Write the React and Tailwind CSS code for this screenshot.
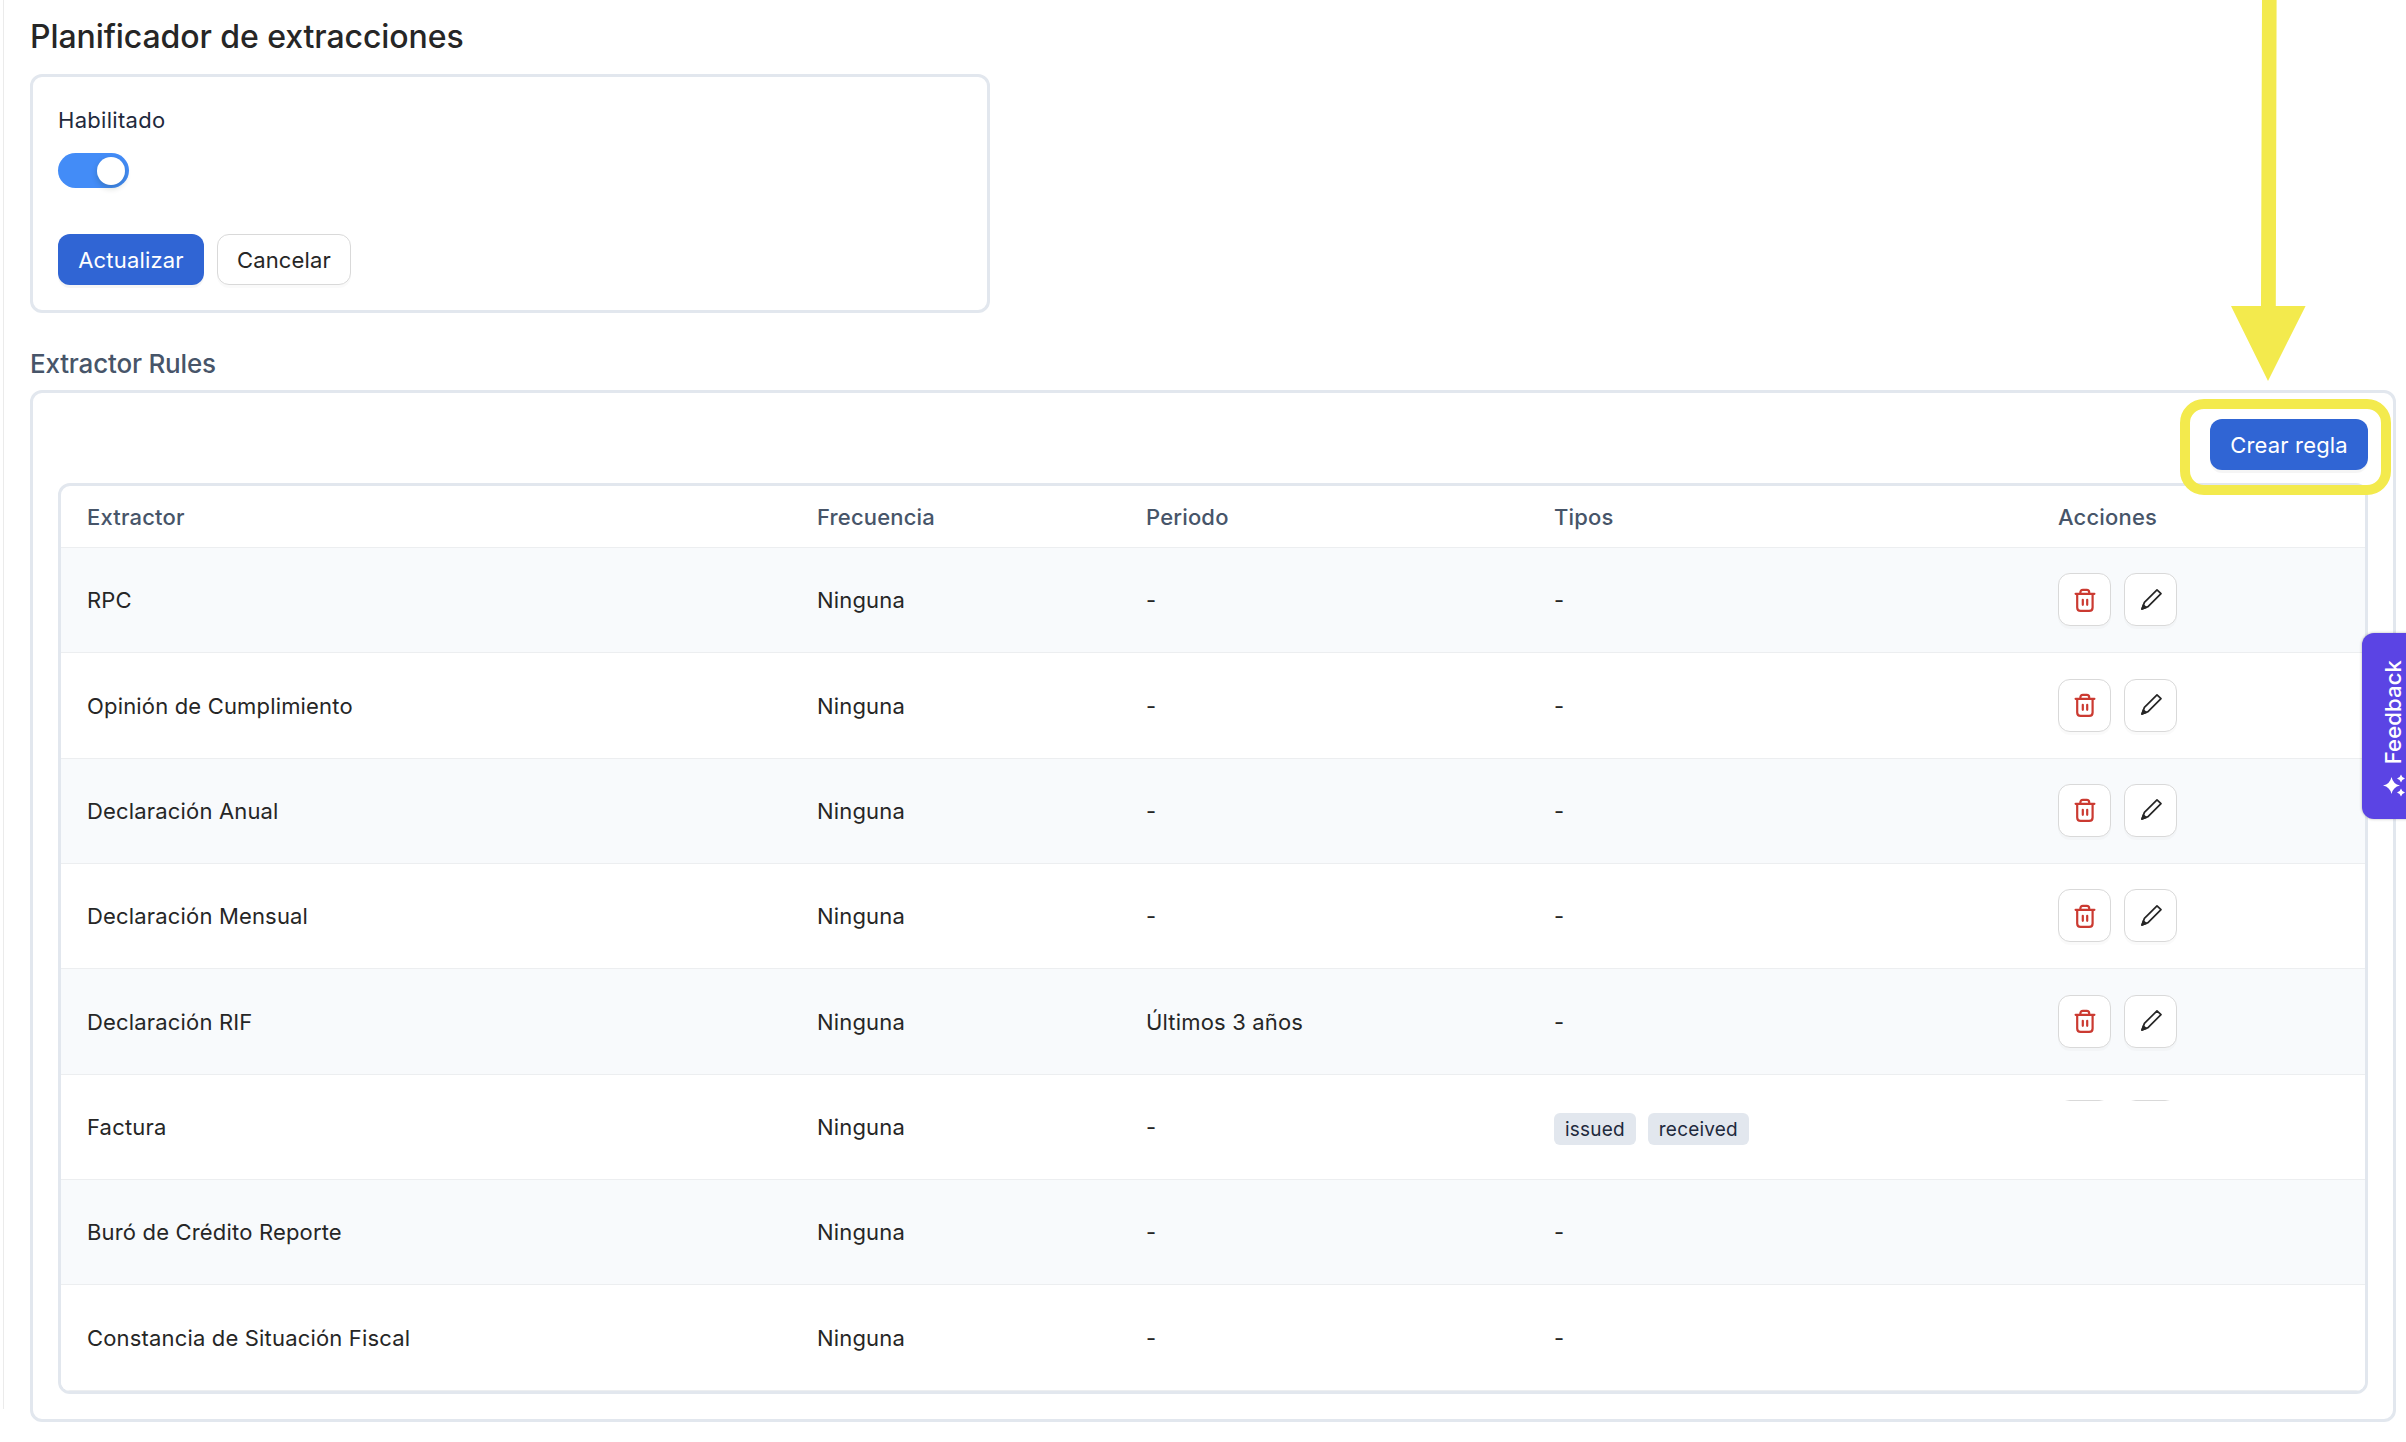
import React from "react";

const rows = [
  { name: "RPC", period: "-", actions: "full" },
  { name: "Opinión de Cumplimiento", period: "-", actions: "full" },
  { name: "Declaración Anual", period: "-", actions: "full" },
  { name: "Declaración Mensual", period: "-", actions: "full" },
  { name: "Declaración RIF", period: "Últimos 3 años", actions: "full" },
  { name: "Factura", period: "-", types: ["issued", "received"], actions: "clipped" },
  { name: "Buró de Crédito Reporte", period: "-" },
  { name: "Constancia de Situación Fiscal", period: "-" },
];

const gridCols = "grid grid-cols-[730px_329px_408px_504px_1fr] items-center pl-[26px]";

function TrashIcon() {
  return (
    <svg className="size-[26px]" viewBox="0 0 26 26" fill="none" stroke="#cb3a31" strokeWidth="2.2" strokeLinecap="round" strokeLinejoin="round">
      <path d="M3.6 6.8H22.4M8.4 6.4V5.3Q8.4 2.8 10.9 2.8H14.7Q17.2 2.8 17.2 5.3V6.4M5.2 7V20.4Q5.2 23.8 8.6 23.8H17.2Q20.6 23.8 20.6 20.4V7M10.8 12.8V17.8M15.2 12.8V17.8" />
    </svg>
  );
}

function PencilIcon() {
  return (
    <svg className="size-[26px]" viewBox="0 0 26 26" fill="none" stroke="#262626" strokeWidth="1.7" strokeLinejoin="round">
      <path d="M19 2.8L23 6.6L10 19.6L4 22L6.4 15.4L19 2.8Z" />
      <path d="M4 22L5.4 18L8 20.4Z" fill="#262626" />
    </svg>
  );
}

function IconButton({ children, label }) {
  return (
    <button aria-label={label} className="flex size-[53px] shrink-0 items-center justify-center rounded-[12px] border border-[#d9d9d9] bg-white shadow-[0_3px_0_rgba(0,0,0,0.02)]">
      {children}
    </button>
  );
}

function Actions({ mode }) {
  if (!mode) return null;
  return (
    <div className={mode === "clipped" ? "mb-[52px] flex h-px gap-[13px] overflow-hidden" : "mb-px flex gap-[13px]"}>
      <IconButton label="Eliminar"><TrashIcon /></IconButton>
      <IconButton label="Editar"><PencilIcon /></IconButton>
    </div>
  );
}

function PrimaryButton({ children, className }) {
  return (
    <button className={`h-[51px] rounded-[12px] bg-[#3065d4] pt-px text-center text-white shadow-[0_3px_0_rgba(0,0,0,0.04)] ${className}`}>
      {children}
    </button>
  );
}

export default function App() {
  return (
    <div className="relative h-[1442px] w-[2406px] overflow-hidden bg-white font-['Inter',sans-serif] text-[22px] leading-[35px] tracking-[0.17px] text-[#262626]">
      <div className="flex">
        <div className="ml-[3px] h-[1409px] w-px bg-[#ebebeb]" />
        <main className="ml-[26px] w-[2366px]">
          <h1 className="h-[74px] pt-[13px] text-[32px] leading-[48px] font-medium tracking-[-0.08px]">Planificador de extracciones</h1>
          <section className="h-[239px] w-[960px] rounded-[12px] border-[3px] border-[#e2e7ee] px-[25px] pt-[26px]">
            <div className="h-[50px] tracking-[0.3px] text-[#1f2a3d]">Habilitado</div>
            <div role="switch" aria-checked="true" className="flex h-[35px] w-[71px] items-center justify-end rounded-full bg-[#438cf7] pr-[4px]">
              <div className="size-[28px] rounded-full bg-white shadow-[0_3px_6px_rgba(0,35,11,0.2)]" />
            </div>
            <div className="mt-[46px] flex gap-[13px]">
              <PrimaryButton className="w-[146px]">Actualizar</PrimaryButton>
              <button className="h-[51px] w-[134px] rounded-[12px] border border-[#d9d9d9] bg-white pt-px shadow-[0_3px_0_rgba(0,0,0,0.02)]">Cancelar</button>
            </div>
          </section>
          <h2 className="h-[77px] pt-[31px] text-[26px] leading-[39px] font-medium tracking-[-0.2px] text-[#475569]">Extractor Rules</h2>
          <section className="h-[1032px] rounded-[12px] border-[3px] border-[#e2e7ee] px-[25px] pt-[26px]">
            <div className="flex h-[64px] justify-end">
              <PrimaryButton className="w-[158px]">Crear regla</PrimaryButton>
            </div>
            <div className="h-[911px] overflow-hidden rounded-[12px] border-[3px] border-[#e2e7ee]">
              <div className={`${gridCols} h-[62px] border-b border-[#eceef0] pt-[2px] font-medium text-[#475569]`}>
                <div>Extractor</div>
                <div>Frecuencia</div>
                <div>Periodo</div>
                <div>Tipos</div>
                <div>Acciones</div>
              </div>
              {rows.map((row) => (
                <div key={row.name} className={`${gridCols} h-[105.35px] border-b border-[#eceef0] odd:bg-white even:bg-[#f8fafc]`}>
                  <div className="pt-[1.5px]">{row.name}</div>
                  <div className="pt-[1.5px]">Ninguna</div>
                  <div className="pt-[1.5px]">{row.period}</div>
                  <div className="flex gap-[12px] pt-[1.5px]">
                    {row.types
                      ? row.types.map((t) => (
                          <span key={t} className="mt-[2px] h-[32px] rounded-[6px] bg-[#e2e7ee] px-[11px] text-[19px] leading-[33px] tracking-[0.2px] text-[#1f2a3d]">{t}</span>
                        ))
                      : "-"}
                  </div>
                  <Actions mode={row.actions} />
                </div>
              ))}
            </div>
          </section>
        </main>
      </div>

      {/* Highlight around the create button and the arrow that points to it */}
      <div className="absolute top-[399px] left-[2180px] h-[96px] w-[211px] rounded-[24px] border-[10px] border-[#f3ea4d]" />
      <svg className="absolute top-0 left-[2220px] h-[382px] w-[96px]" viewBox="0 0 96 382" fill="#f3ea4d">
        <path d="M42 0H56.6L55.8 306H85.6L48 381L11 306H41Z" />
      </svg>

      <div className="absolute top-[633px] left-[2362px] flex h-[186px] w-[62px] flex-col items-center rounded-l-[12px] bg-[#5b44e4] pt-[27px] text-white shadow-[0_0_3px_rgba(0,0,0,0.3)]">
        <span className="rotate-180 text-[22px] leading-[26px] font-medium [writing-mode:vertical-rl]">Feedback</span>
        <svg className="absolute top-[141px] left-[20px] size-[24px]" viewBox="0 0 24 24" fill="currentColor">
          <path d="M9.5 3Q11 10 18 11.5Q11 13 9.5 20Q8 13 1 11.5Q8 10 9.5 3Z" />
          <path d="M19 0.5Q19.8 3.7 23 4.5Q19.8 5.3 19 8.5Q18.2 5.3 15 4.5Q18.2 3.7 19 0.5Z" />
          <path d="M19 14.5Q19.8 17.7 23 18.5Q19.8 19.3 19 22.5Q18.2 19.3 15 18.5Q18.2 17.7 19 14.5Z" />
        </svg>
      </div>
    </div>
  );
}
